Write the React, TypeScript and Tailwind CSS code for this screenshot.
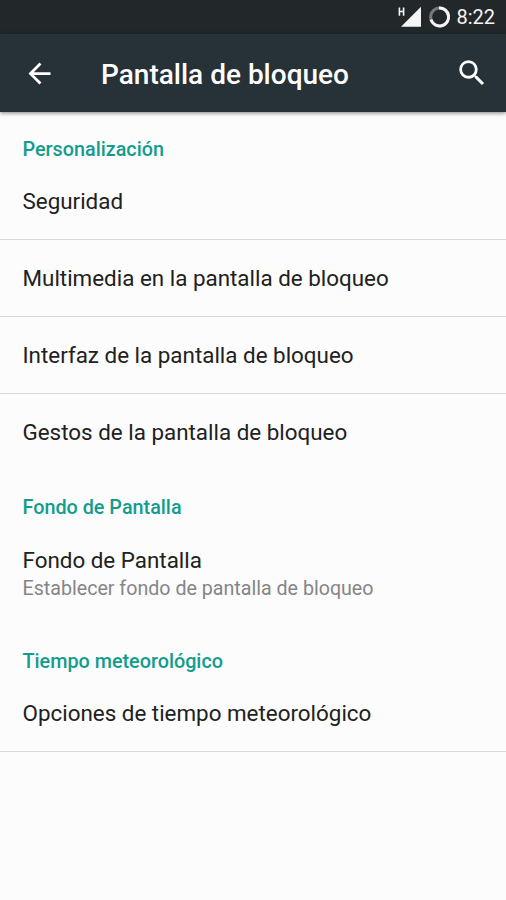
type Item = {
  title: string;
  summary?: string;
};

type Section = {
  name: string;
  items: Item[];
  closed?: boolean;
};

const sections: Section[] = [
  {
    name: "Personalización",
    items: [
      { title: "Seguridad" },
      { title: "Multimedia en la pantalla de bloqueo" },
      { title: "Interfaz de la pantalla de bloqueo" },
      { title: "Gestos de la pantalla de bloqueo" },
    ],
  },
  {
    name: "Fondo de Pantalla",
    items: [{ title: "Fondo de Pantalla", summary: "Establecer fondo de pantalla de bloqueo" }],
  },
  {
    name: "Tiempo meteorológico",
    items: [{ title: "Opciones de tiempo meteorológico" }],
    closed: true,
  },
];

function StatusBar() {
  return (
    <div className="flex h-[34px] items-center justify-end bg-[#22272a] pr-[11px] text-[#f5f5f5]">
      <svg className="h-[34px] w-[26px]" viewBox="0 0 26 34" fill="none" stroke="currentColor">
        <path d="M1.4 7.5v8.3M5.6 7.5v8.3M1.4 11.5h4.2" strokeWidth="1.6" />
        <path d="M23 6.8v20H3z" fill="currentColor" stroke="none" />
      </svg>
      {/* battery ring, about three quarters full */}
      <svg className="ml-1 h-[34px] w-[24px]" viewBox="0 0 24 34" fill="none" stroke="currentColor">
        <circle cx="11.6" cy="17" r="9" strokeWidth="3" opacity="0.4" />
        <path d="M11 8a9 9 0 1 1-8 11.6" strokeWidth="3" />
      </svg>
      <span className="ml-1 pt-px text-[20px] leading-[33px]">8:22</span>
    </div>
  );
}

function Toolbar() {
  return (
    <header className="flex h-[78px] items-center bg-[#263238] pr-[17px] pl-[23px] text-white shadow-[0_1px_4px_rgba(0,0,0,0.5)]">
      <button type="button" aria-label="Atrás">
        <svg className="size-[33px]" viewBox="0 0 24 24" fill="currentColor">
          <path d="M20 11H7.83l5.59-5.59L12 4l-8 8 8 8 1.41-1.41L7.83 13H20v-2z" />
        </svg>
      </button>
      <h1 className="ml-[45px] flex-1 pt-[3px] text-[28px] font-medium">Pantalla de bloqueo</h1>
      <button type="button" aria-label="Buscar">
        <svg className="size-[34px]" viewBox="0 0 24 24" fill="currentColor">
          <path d="M15.5 14h-.79l-.28-.27A6.471 6.471 0 0 0 16 9.5 6.5 6.5 0 1 0 9.5 16c1.61 0 3.09-.59 4.23-1.57l.27.28v.79l5 4.99L20.49 19l-4.99-5zm-6 0C7.01 14 5 11.99 5 9.5S7.01 5 9.5 5 14 7.01 14 9.5 11.99 14 9.5 14z" />
        </svg>
      </button>
    </header>
  );
}

function Row({ item, divider }: { item: Item; divider: boolean }) {
  return (
    <div
      className={`flex flex-col justify-center border-b px-[22.5px] ${item.summary ? "h-[104px] pt-[2px]" : "h-[77px]"} ${divider ? "border-[#d8d8d8]" : "border-transparent"}`}
    >
      <span className="text-[22.4px] leading-[30px] text-[#212121]">{item.title}</span>
      {item.summary && (
        <span className="text-[19.65px] leading-[27px] text-[#858585]">{item.summary}</span>
      )}
    </div>
  );
}

export default function App() {
  return (
    <div className="h-[900px] w-[506px] overflow-hidden bg-[#fcfcfc] font-['Roboto',sans-serif]">
      <StatusBar />
      <Toolbar />
      <main className="pt-px">
        {sections.map((s) => (
          <section key={s.name}>
            <h2 className="h-[50px] px-[22.5px] pt-[22px] text-[19.8px] leading-[30px] font-medium text-[#139c8e]">
              {s.name}
            </h2>
            {s.items.map((item, i) => (
              <Row
                key={item.title}
                item={item}
                divider={i < s.items.length - 1 || Boolean(s.closed)}
              />
            ))}
          </section>
        ))}
      </main>
    </div>
  );
}
